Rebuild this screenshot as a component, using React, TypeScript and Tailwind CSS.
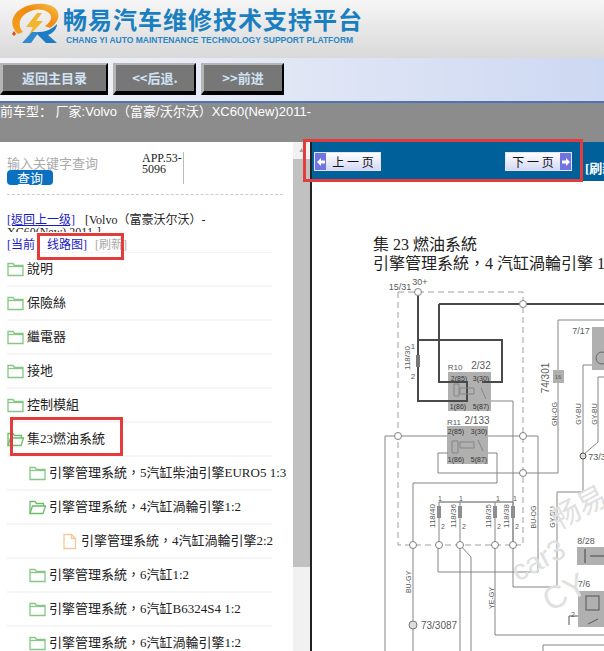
const cjk = "font-['Liberation_Serif','Noto_Sans_CJK_TC',serif]";

const treeItems = [
  { name: "說明", level: 0, icon: "closed" },
  { name: "保險絲", level: 0, icon: "closed" },
  { name: "繼電器", level: 0, icon: "closed" },
  { name: "接地", level: 0, icon: "closed" },
  { name: "控制模組", level: 0, icon: "closed" },
  { name: "集23燃油系統", level: 0, icon: "open" },
  { name: "引擎管理系統，5汽缸柴油引擎EURO5 1:3", level: 1, icon: "closed" },
  { name: "引擎管理系統，4汽缸渦輪引擎1:2", level: 1, icon: "open" },
  { name: "引擎管理系統，4汽缸渦輪引擎2:2", level: 2, icon: "file" },
  { name: "引擎管理系統，6汽缸1:2", level: 1, icon: "closed" },
  { name: "引擎管理系統，6汽缸B6324S4 1:2", level: 1, icon: "closed" },
  { name: "引擎管理系統，6汽缸渦輪引擎1:2", level: 1, icon: "closed" },
];

const TreeIcon = ({ type }: { type: string }) => {
  if (type === "file") {
    return (
      <svg width="16" height="17" viewBox="0 0 16 17" fill="none" stroke="#f3c99b" strokeWidth="1.3" className="shrink-0">
        <path d="M2 1.500h7.500l4 4v10h-11.500z" />
        <path d="M9.500 1.500v4h4" />
      </svg>
    );
  }
  if (type === "open") {
    return (
      <svg width="17" height="15" viewBox="0 0 17 15" fill="none" stroke="#6cbc6c" strokeWidth="1.3" className="shrink-0">
        <path d="M1 13.500V1.500h5l1.500 2h7v2.500" />
        <path d="M1 13.500l2.500-7.500h13l-2.500 7.500z" />
      </svg>
    );
  }
  return (
    <svg width="17" height="15" viewBox="0 0 17 15" fill="none" stroke="#86c786" strokeWidth="1.3" className="shrink-0">
      <path d="M1 13.500V1.500h5l1.500 2h8.500v10z" />
      <path d="M1 4.500h15" />
    </svg>
  );
};

const Logo = () => (
  <svg width="60" height="46" viewBox="0 0 60 46" className="shrink-0">
    <defs>
      <linearGradient id="ring" x1="0" y1="1" x2="1" y2="0">
        <stop offset="0" stopColor="#f2a21c" />
        <stop offset="0.6" stopColor="#f08a12" />
        <stop offset="1" stopColor="#f6c44a" />
      </linearGradient>
    </defs>
    <path d="M9 31C2 25 1 16 8 9 18-1 40-2 47 6c5 6 2 14-6 19l-5-2c6-4 8-9 4-13C33 4 21 6 14 13c-5 5-4 12 0 16z" fill="url(#ring)" />
    <path d="M28 10L17 24h7l-5 10 15-16h-7l6-8z" fill="#f4b52e" />
    <path d="M24 29h7c7 0 13-4 17-8 0 5-4 9-9 11l9 8H37l-9-9-4 1z" fill="#1c7cc6" />
    <path d="M13 40l10-11h7l-8 11z" fill="#2f8ad0" />
    <path d="M5 28l2 3-2 2-2-2z" fill="#e0501a" />
  </svg>
);

const navButtons = [
  { label: "返回主目录", width: "w-[108px]" },
  { label: "<<后退.", width: "w-[83px]" },
  { label: ">>前进", width: "w-[83px]" },
];

const PageButton = ({ label, dir }: { label: string; dir: "left" | "right" }) => {
  const arrow = (
    <span className="flex h-full w-[11px] shrink-0 items-center justify-center bg-[#6f74e0]">
      <svg width="8" height="8" viewBox="0 0 8 8" fill="#fff">
        {dir === "left" ? <path d="M0 4l4-4v2.500h4v3H4V8z" /> : <path d="M8 4L4 0v2.500H0v3h4V8z" />}
      </svg>
    </span>
  );
  return (
    <div className="flex h-[19px] w-[67px] shrink-0 items-center justify-between border border-[#dfe4fb] bg-gradient-to-b from-[#ffffff] to-[#d4d8f6] text-[12px] font-normal text-[#111] font-['Noto_Sans_CJK_SC',sans-serif]">
      {dir === "left" && arrow}
      <span className="flex-1 text-center whitespace-pre">{label}</span>
      {dir === "right" && arrow}
    </div>
  );
};

const wire = { stroke: "#858585", strokeWidth: 1, fill: "none" };
const heavy = { stroke: "#4a4a4a", strokeWidth: 2, fill: "none" };

const Node = ({ x, y }: { x: number; y: number }) => (
  <circle cx={x} cy={y} r="3.500" fill="#fff" stroke="#808080" strokeWidth="1" />
);

const Label = ({ x, y, t, rot, size = 8, fill = "#5a5a5a" }: { x: number; y: number; t: string; rot?: boolean; size?: number; fill?: string }) => (
  <text x={x} y={y} fontSize={size} fill={fill} textAnchor="middle" fontFamily="Liberation Sans" transform={rot ? `rotate(-90 ${x} ${y})` : undefined}>
    {t}
  </text>
);

const Diagram = () => (
  <svg width="292" height="374" viewBox="312 277 292 374" className="mt-[4px] block shrink-0">
    <path d="M398 292H523V545H398z" fill="none" stroke="#a0a0a0" strokeWidth="1" strokeDasharray="6 4" />
    <rect x="448" y="372" width="43" height="39" fill="#b0b0b0" />
    <rect x="447" y="426" width="41" height="38" fill="#b0b0b0" />
    <path d="M439 304H604M439 304V382H467V401H418V292M418 340H502V382H482" {...heavy} />
    <path d="M454 384h5v12h-5zM460 388h14v6h-14zM481 388l5 11M447 436H385V651M488 436H538V572H438V545M491 401H513V587H557V492H583V365H592M558 320H604M558 320V473H438V453H448M488 453H497V483H413V651M598 377H604M598 377V442L583 455" {...wire} />
    <path d="M452 441h6v12h-6zM460 442h14v6h-14zM478 440l5 11" {...wire} />
    <path d="M439 502H513" stroke="#555" strokeWidth="1" />
    <path d="M439 502V545M460 502V651M495 502V635H604M513 502V545M460 545L471 557V651M543 651V645H604" {...wire} />
    {[439, 460, 495, 513].map((x) => (
      <rect key={x} x={x - 2} y="506" width="4" height="12" fill="#8e8e8e" />
    ))}
    <rect x="416" y="355" width="4" height="12" fill="#777" />
    <rect x="592" y="327" width="12" height="43" fill="#b0b0b0" />
    <circle cx="602" cy="358" r="6" fill="none" stroke="#666" />
    <rect x="553" y="370" width="11" height="13" fill="#b0b0b0" />
    <rect x="577" y="547" width="27" height="18" fill="#b0b0b0" />
    <path d="M585 549v14M590 556h14" stroke="#444" strokeWidth="1" fill="none" />
    <rect x="578" y="591" width="26" height="36" fill="#b0b0b0" />
    <rect x="586" y="596" width="13" height="14" fill="none" stroke="#555" />
    <path d="M569 616H578M569 616V625M588 624l10-5" stroke="#555" fill="none" />
    <circle cx="413" cy="625" r="4" fill="#ddd" stroke="#777" />
    <circle cx="583" cy="456" r="3" fill="#ddd" stroke="#555" />
    {[[418, 292], [523, 304], [398, 436], [523, 436], [523, 473], [413, 545], [439, 545], [460, 545], [495, 545], [513, 545]].map(([x, y]) => (
      <Node key={`${x}-${y}`} x={x} y={y} />
    ))}
    <Label x={420} y={285} t="30+" size={9} />
    <Label x={400} y={290} t="15/31" size={9} />
    <Label x={410} y={358} t="118/30" rot />
    <Label x={413} y={349} t="1" />
    <Label x={413} y={379} t="2" />
    <Label x={455} y={370} t="R10" />
    <Label x={481} y={369} t="2/32" size={10} />
    <Label x={459} y={381} t="2(85)" size={7} fill="#333" />
    <Label x={481} y={381} t="3(30)" size={7} fill="#333" />
    <Label x={458} y={409} t="1(86)" size={7} fill="#333" />
    <Label x={481} y={409} t="5(87)" size={7} fill="#333" />
    <Label x={454} y={425} t="R11" />
    <Label x={477} y={424} t="2/133" size={10} />
    <Label x={456} y={434} t="2(85)" size={7} fill="#333" />
    <Label x={479} y={434} t="3(30)" size={7} fill="#333" />
    <Label x={456} y={462} t="1(86)" size={7} fill="#333" />
    <Label x={479} y={462} t="5(87)" size={7} fill="#333" />
    <Label x={581} y={334} t="7/17" size={9} />
    <Label x={558} y={379} t="16" size={6} />
    <Label x={549} y={378} t="74/301" rot size={10} />
    <Label x={557} y={414} t="GN-OG" rot size={7} />
    <Label x={581} y={414} t="GY-BU" rot size={7} />
    <Label x={597} y={414} t="GY-BU" rot size={7} />
    <Label x={597} y={460} t="73/3" size={9} />
    <Label x={435} y={516} t="118/40" rot />
    <Label x={456} y={516} t="118/36" rot />
    <Label x={491} y={516} t="118/35" rot />
    <Label x={509} y={516} t="118/38" rot />
    {[439, 460, 497, 514].map((x) => (
      <Label key={x} x={x + 1} y={501} t="1" size={7} />
    ))}
    {[443, 464, 499, 517].map((x) => (
      <Label key={x} x={x} y={529} t="2" size={7} />
    ))}
    <Label x={411} y={582} t="BU-GY" rot size={7} />
    <Label x={494} y={598} t="YE-GY" rot size={7} />
    <Label x={536} y={517} t="BU-OG" rot size={7} />
    <Label x={555} y={517} t="GY-BU" rot size={7} />
    <Label x={439} y={629} t="73/3087" size={10} />
    <Label x={586} y={544} t="8/28" size={9} />
    <Label x={584} y={587} t="7/6" size={9} />
    <Label x={573} y={617} t="2" size={7} />
    <g fill="#e0e0e0" fontFamily="Liberation Sans">
      <text x="558" y="530" fontSize="29" fontFamily="Noto Sans CJK SC" transform="rotate(-28 558 530)">畅易</text>
      <text x="518" y="582" fontSize="29" transform="rotate(-28 518 582)">car3</text>
      <text x="550" y="612" fontSize="32" transform="rotate(-28 550 612)">CY</text>
    </g>
  </svg>
);

export default function App() {
  return (
    <div className={`relative flex h-[651px] w-[604px] flex-col overflow-hidden bg-white ${cjk}`}>
      {/* header */}
      <header className="flex h-[58px] shrink-0 items-start bg-gradient-to-b from-[#f6f6f6] to-[#d9d9d9] pl-[9px] pt-[3px]">
        <Logo />
        <div className="ml-[-6px] flex flex-col">
          <h1 className="mt-[1px] whitespace-nowrap text-[24px] leading-[30px] font-bold tracking-[1px] text-[#1a7fc0] font-['Noto_Sans_CJK_SC',sans-serif]">
            畅易汽车维修技术支持平台
          </h1>
          <p className="ml-[3px] whitespace-nowrap text-[8.5px] leading-[12px] font-bold text-[#2b85c6] font-['Liberation_Sans',sans-serif]">
            CHANG YI AUTO MAINTENANCE TECHNOLOGY SUPPORT PLATFORM
          </p>
        </div>
      </header>

      {/* nav */}
      <nav className="flex h-[43px] shrink-0 items-start gap-[5px] bg-gradient-to-r from-[#f4f4f8] to-[#cdd8f2] pt-[5px]">
        {navButtons.map((b) => (
          <div
            key={b.label}
            className={`flex h-[32px] items-center justify-center border-l-[3px] border-t-[2px] border-r-[2px] border-b-[4px] border-l-[#b5b5b5] border-t-[#b5b5b5] border-r-black border-b-black bg-[#777] text-[13px] font-bold text-[#cfe3f5] font-['Noto_Sans_CJK_SC',sans-serif] ${b.width}`}
          >
            {b.label}
          </div>
        ))}
      </nav>

      <div className="h-[41px] shrink-0 border-t-[2px] border-[#4f74b4] bg-[#8c8c8c] text-[13px] leading-[17px] whitespace-nowrap text-white font-['Liberation_Sans','Noto_Sans_CJK_SC',sans-serif]">
        前车型： 厂家:Volvo（富豪/沃尔沃）XC60(New)2011-
      </div>

      <div className="flex min-h-0 flex-1">
        {/* sidebar */}
        <aside className="relative w-[293px] shrink-0 overflow-hidden pl-[7px]">
          <div className="mt-[12px] flex h-[32px] items-start">
            <div className="w-[135px] shrink-0">
              <div className="mt-[1px] text-[13px] leading-[15px] text-[#aaa] font-['Noto_Sans_CJK_SC',sans-serif]">输入关键字查询</div>
              <div className="flex h-[15px] w-[46px] items-center justify-center rounded-[4px] bg-[#0b70bf] text-[13px] text-white font-['Noto_Sans_CJK_SC',sans-serif]">查询</div>
            </div>
            <div className="mt-[-2px] h-[32px] w-[42px] border-r border-[#bbb] text-[12px] leading-[11px] pt-[1px] text-[#222]">
              APP.53-
              <br />
              5096
            </div>
          </div>
          <div className="mt-[8px] w-[276px] border-t border-dashed border-[#ccc]" />
          <div className="mt-[19px] w-[225px] text-[12px] leading-[12px] text-[#222]">
            <a className="mr-[10px] text-[#1a1ac0] underline">[返回上一级]</a>
            <span>[Volvo（富豪沃尔沃）- XC60(New) 2011-]</span>
          </div>
          <div className="relative mt-[-6px] flex h-[20px] items-end gap-[12px] bg-white whitespace-nowrap text-[12px] leading-[14px]">
            <span className="text-[#1a1ac0]">[当前</span>
            <span className="flex gap-[8px]">
              <span className="text-[#1a1ac0]">线路图]</span>
              <span className="text-[#aaa]">[刷新]</span>
            </span>
          </div>
          <ul className="mt-[-1px] w-[265px]">
            {treeItems.map((item) => (
              <li
                key={item.name}
                className={`flex h-[34px] items-center gap-[3px] border-t-2 border-[#f5f5f5] whitespace-nowrap text-[13px] text-[#222] ${item.level === 1 ? "pl-[22px]" : item.level === 2 ? "pl-[55px]" : ""}`}
              >
                <TreeIcon type={item.icon} />
                <span>{item.name}</span>
              </li>
            ))}
          </ul>
        </aside>

        {/* scrollbar */}
        <div className="flex w-[17px] shrink-0 flex-col bg-[#f1f1f1]">
          <div className="flex h-[17px] items-center justify-center text-[7px] text-[#a3a3a3]">▲</div>
          <div className="h-[408px] w-full bg-[#c1c1c1]" />
        </div>

        {/* viewer */}
        <main className="flex min-w-0 flex-1 flex-col overflow-hidden border-l-2 border-[#222]">
          <div className="flex h-[39px] shrink-0 items-center bg-[#00609a] pl-[2px] text-[13px] font-bold whitespace-nowrap text-white">
            <PageButton label="上 一 页" dir="left" />
            <div className="ml-[124px] shrink-0">
              <PageButton label="下 一 页" dir="right" />
            </div>
            <span className="ml-[13px] mt-[14px] shrink-0">[刷新]</span>
          </div>
          <div className="ml-[61px] mt-[54px] shrink-0 text-[16px] leading-[19px] whitespace-nowrap text-[#222]">
            <div>集 23 燃油系統</div>
            <div>引擎管理系統，4 汽缸渦輪引擎 1:2</div>
          </div>
          <Diagram />
        </main>
      </div>

      {/* red annotation boxes */}
      <div className="absolute left-[303px] top-[139px] h-[43px] w-[280px] border-[3px] border-[#e33c3c]" />
      <div className="absolute left-[37px] top-[233px] h-[27px] w-[87px] border-[3px] border-[#e33c3c]" />
      <div className="absolute left-[10px] top-[417px] h-[39px] w-[113px] border-[3px] border-[#e33c3c]" />
    </div>
  );
}
